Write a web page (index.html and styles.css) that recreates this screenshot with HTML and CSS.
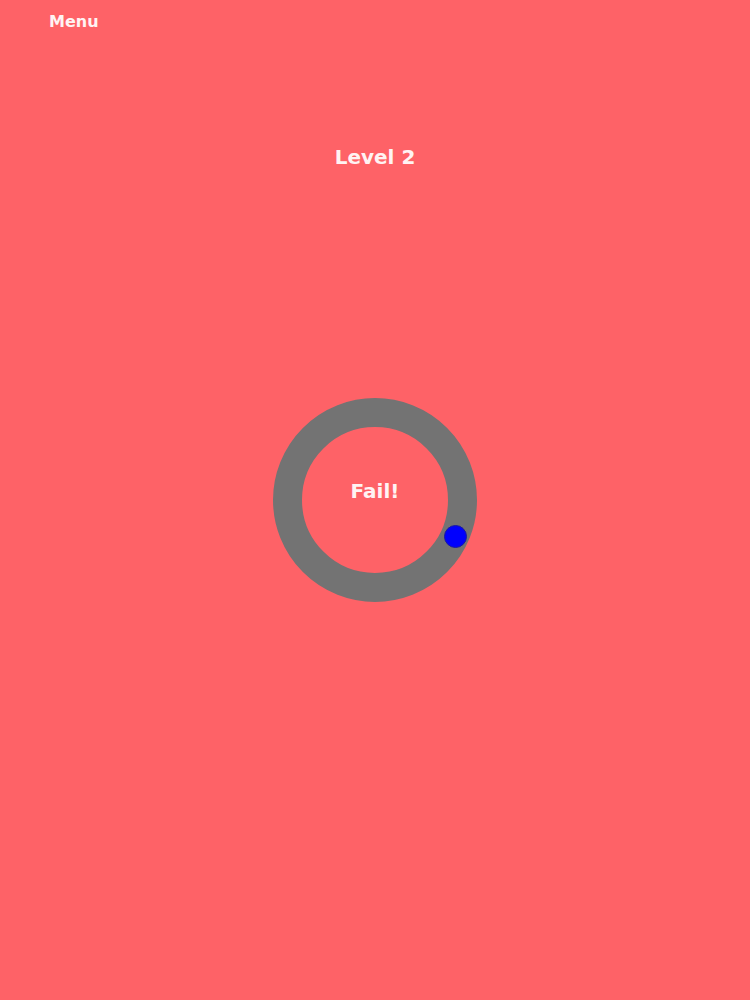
FILE: index.html
```html
<!DOCTYPE html>
<html>
<head>
<meta charset="utf-8">
<link rel="stylesheet" href="styles.css">
</head>
<body>
<div class="page">
  <header class="topbar"><span class="menu">Menu</span></header>
  <h1 class="level">Level 2</h1>
  <div class="stage">
    <div class="ring">
      <span class="status">Fail!</span>
      <span class="ball"></span>
    </div>
  </div>
</div>
</body>
</html>
```
FILE: styles.css
```css
html, body {
  margin: 0;
  padding: 0;
  background: #fe6267;
}
.page {
  width: 750px;
  height: 1000px;
  display: flex;
  flex-direction: column;
  font-family: "DejaVu Sans", Verdana, sans-serif;
  font-weight: bold;
  color: #fff3f3;
}
.topbar {
  padding: 12px 0 0 49px;
  height: 20px;
}
.menu {
  font-size: 16px;
  line-height: 20px;
}
.level {
  margin: 113px 0 0 0;
  font-size: 20px;
  line-height: 24px;
  text-align: center;
  font-weight: bold;
}
.stage {
  display: flex;
  justify-content: center;
  margin-top: 229px;
}
.ring {
  position: relative;
  box-sizing: border-box;
  width: 204px;
  height: 204px;
  border: 29px solid #737373;
  border-radius: 50%;
  display: flex;
  align-items: center;
  justify-content: center;
  padding-bottom: 18px;
}
.status {
  font-size: 20px;
  line-height: 24px;
}
.ball {
  position: absolute;
  left: 142px;
  top: 98px;
  width: 23px;
  height: 23px;
  box-sizing: border-box;
  border-radius: 50%;
  background: #0000fe;
  border: 1px solid #1a1aa0;
}
```
